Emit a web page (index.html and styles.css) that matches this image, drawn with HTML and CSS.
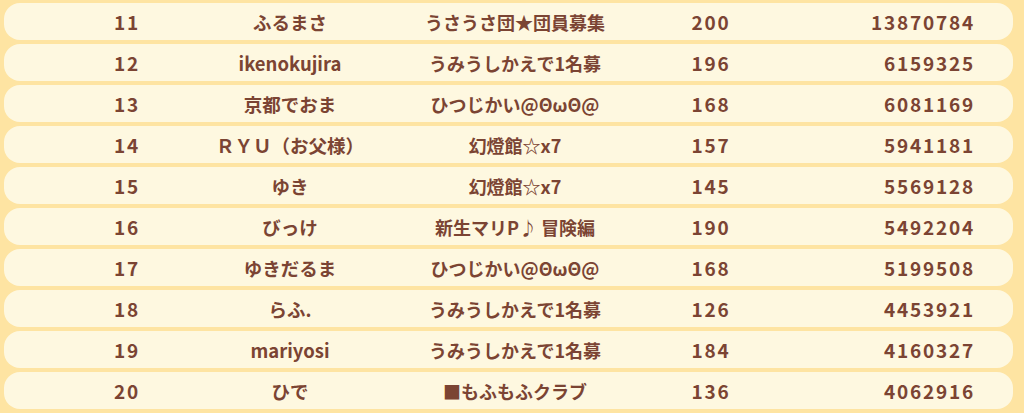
FILE: index.html
```html
<!DOCTYPE html>
<html lang="ja">
<head>
<meta charset="utf-8">
<link rel="stylesheet" href="styles.css">
</head>
<body>
<div class="list">
  <div class="row"><span class="rank">11</span><span class="name">ふるまさ</span><span class="guild">うさうさ団★団員募集</span><span class="level">200</span><span class="score">13870784</span></div>
  <div class="row"><span class="rank">12</span><span class="name">ikenokujira</span><span class="guild">うみうしかえで1名募</span><span class="level">196</span><span class="score">6159325</span></div>
  <div class="row"><span class="rank">13</span><span class="name">京都でおま</span><span class="guild">ひつじかい@ΘωΘ@</span><span class="level">168</span><span class="score">6081169</span></div>
  <div class="row"><span class="rank">14</span><span class="name">ＲＹＵ（お父様）</span><span class="guild">幻燈館☆x7</span><span class="level">157</span><span class="score">5941181</span></div>
  <div class="row"><span class="rank">15</span><span class="name">ゆき</span><span class="guild">幻燈館☆x7</span><span class="level">145</span><span class="score">5569128</span></div>
  <div class="row"><span class="rank">16</span><span class="name">びっけ</span><span class="guild">新生マリP♪ 冒険編</span><span class="level">190</span><span class="score">5492204</span></div>
  <div class="row"><span class="rank">17</span><span class="name">ゆきだるま</span><span class="guild">ひつじかい@ΘωΘ@</span><span class="level">168</span><span class="score">5199508</span></div>
  <div class="row"><span class="rank">18</span><span class="name">らふ.</span><span class="guild">うみうしかえで1名募</span><span class="level">126</span><span class="score">4453921</span></div>
  <div class="row"><span class="rank">19</span><span class="name">mariyosi</span><span class="guild">うみうしかえで1名募</span><span class="level">184</span><span class="score">4160327</span></div>
  <div class="row"><span class="rank">20</span><span class="name">ひで</span><span class="guild">■もふもふクラブ</span><span class="level">136</span><span class="score">4062916</span></div>
</div>
</body>
</html>
```
FILE: styles.css
```css
html, body {
  margin: 0;
  padding: 0;
  background: #fee4a2;
}
.list {
  display: flex;
  flex-direction: column;
  gap: 4px;
  padding: 3px 11px 0 4px;
}
.row {
  display: grid;
  grid-template-columns: 166px 160px 290px 102px 1fr;
  align-items: center;
  height: 37px;
  padding: 0 38px 0 40px;
  background: #fef8e0;
  border-radius: 16px;
  color: #7b4433;
  font-family: "Noto Sans CJK JP", "Noto Sans", sans-serif;
  font-weight: 700;
  font-size: 18px;
  white-space: nowrap;
}
.rank, .name, .guild, .level {
  text-align: center;
}
.score {
  text-align: right;
}
.name {
  font-size: 18.5px;
}
.rank, .level, .score {
  font-size: 19px;
  letter-spacing: 1.8px;
}
```
